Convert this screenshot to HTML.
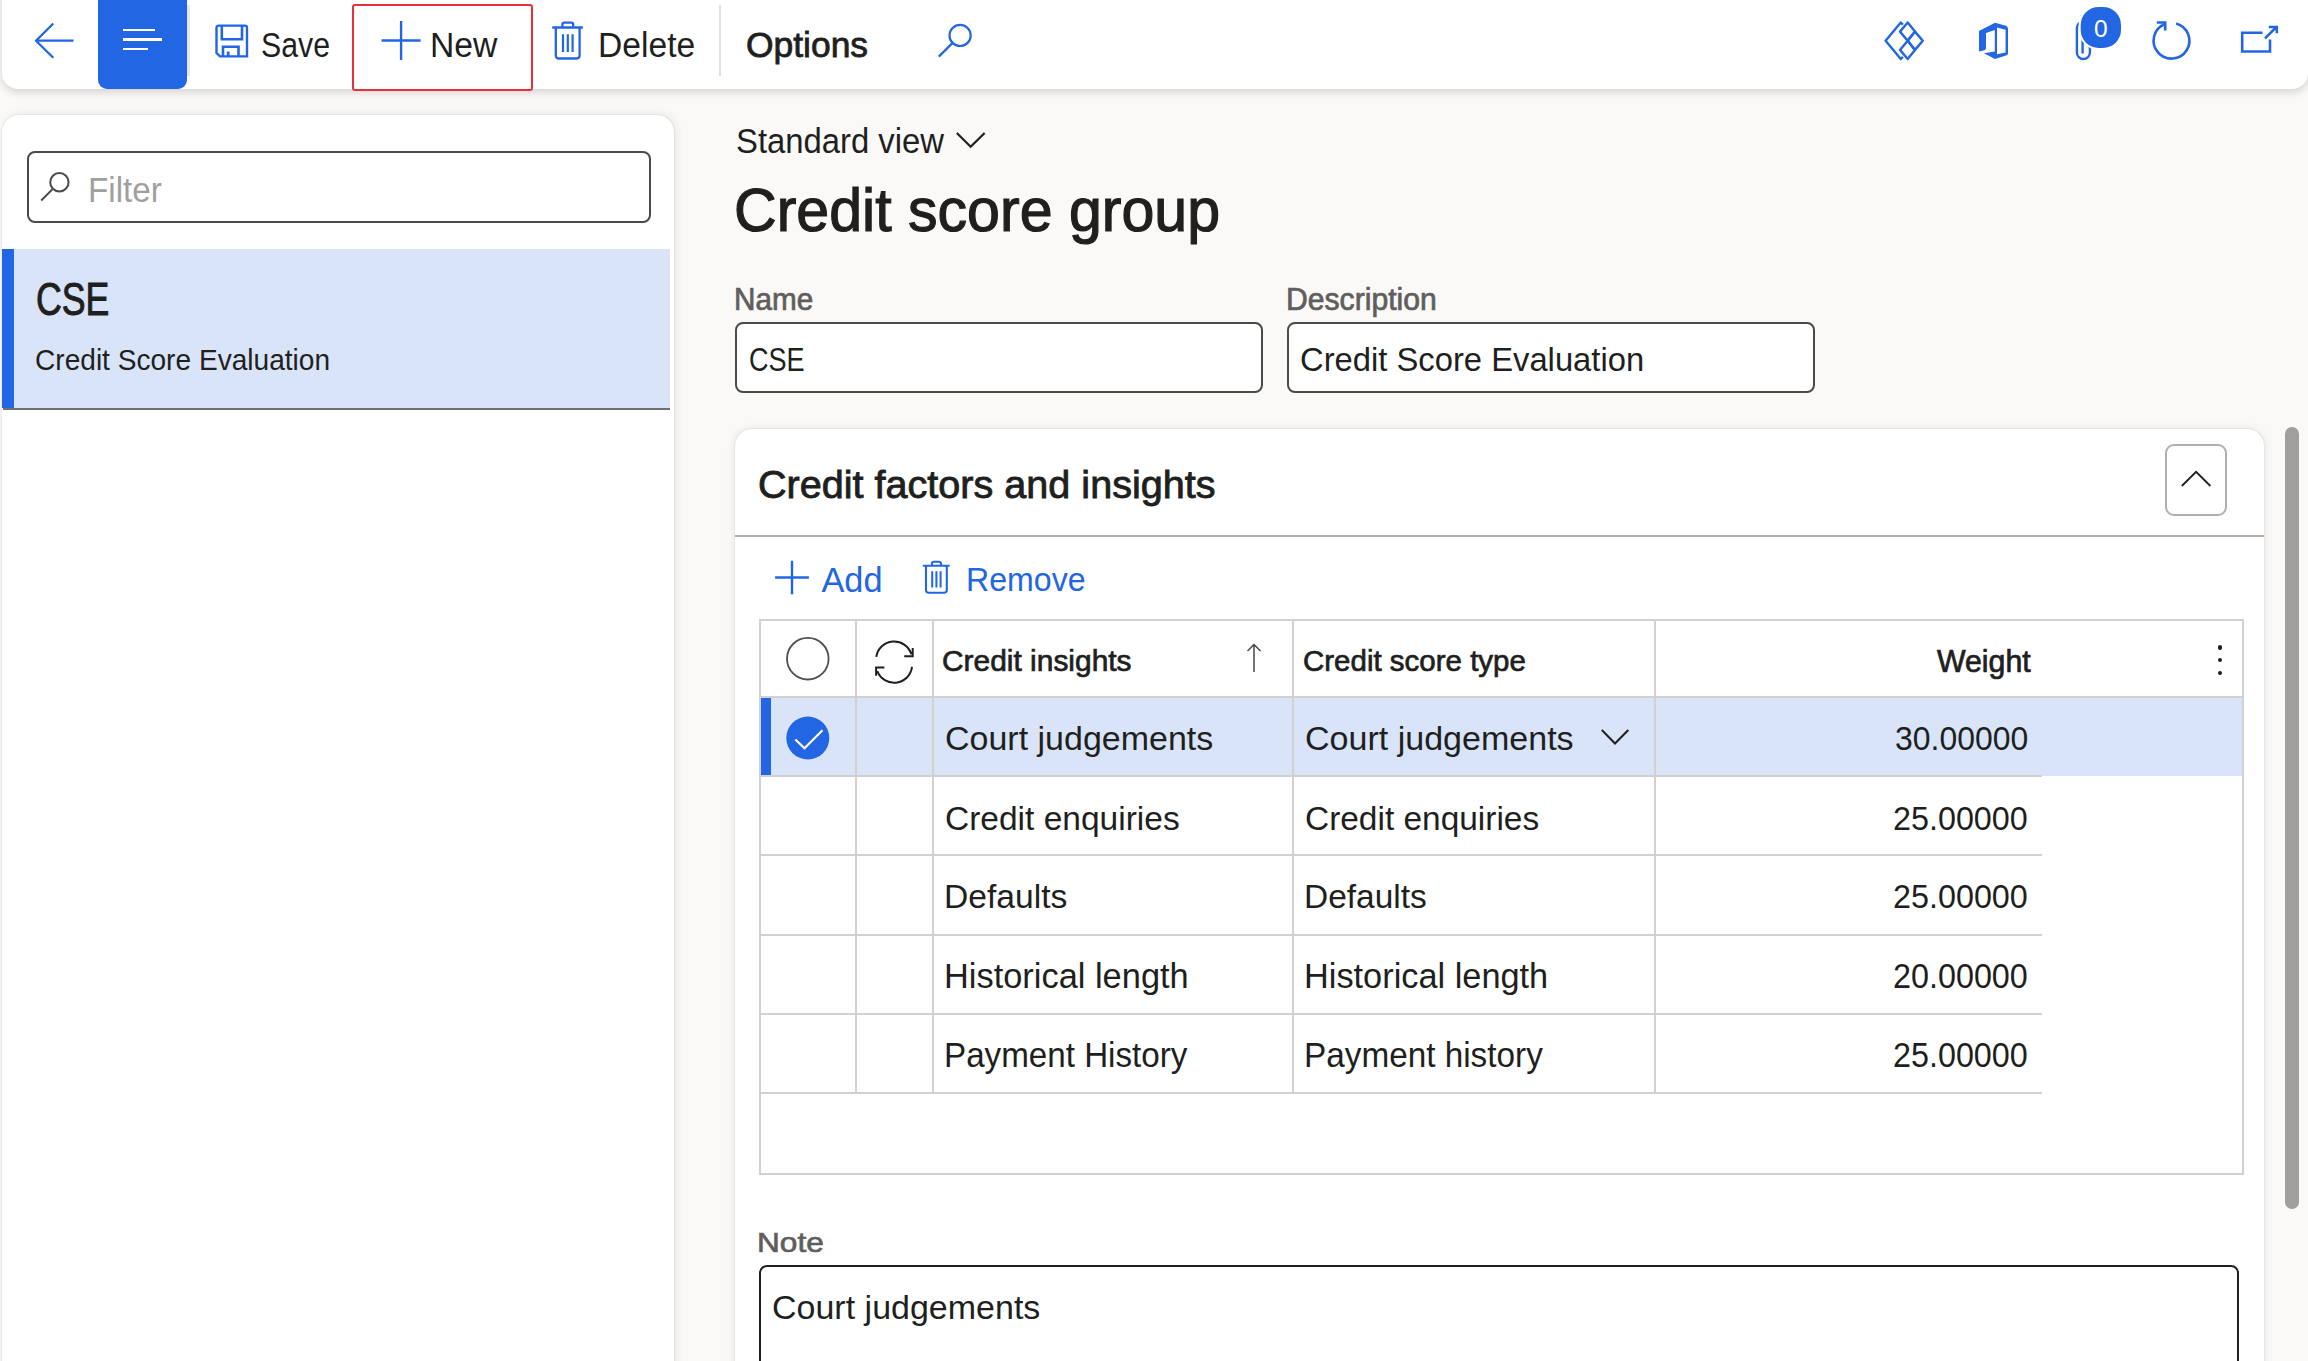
<!DOCTYPE html>
<html><head><meta charset="utf-8"><style>
html,body{margin:0;padding:0;}
body{width:2308px;height:1361px;overflow:hidden;position:relative;background:#faf9f8;font-family:"Liberation Sans",sans-serif;}
.t{position:absolute;white-space:nowrap;transform-origin:0 0;}
</style></head><body>
<div style="position:absolute;left:2px;top:-30px;width:2306px;height:119px;background:#fff;border-radius:16px;box-shadow:0 3px 8px rgba(0,0,0,0.16);"></div>
<div style="position:absolute;left:98px;top:-20px;width:89px;height:109px;background:#2266e3;border-radius:9px;"></div>
<div style="position:absolute;left:123px;top:28.75px;width:32px;height:2.5px;background:#fff;"></div>
<div style="position:absolute;left:123px;top:38.25px;width:39px;height:2.5px;background:#fff;"></div>
<div style="position:absolute;left:123px;top:47.75px;width:25px;height:2.5px;background:#fff;"></div>
<svg style="position:absolute;left:0;top:0" width="2308" height="100" viewBox="0 0 2308 100">
<g fill="none" stroke="#2266e3" stroke-width="2.6" stroke-linecap="butt" stroke-linejoin="miter">
<path d="M73.5 40.7 H36.5 M53.3 23.5 L36 40.7 L53.3 57.8" stroke-width="2.3" stroke-linejoin="round"/>
<!-- save -->
<path d="M218.8 25.6 H244.8 Q247 25.6 247 27.8 V56.4 H220 L216.5 53 V27.9 Q216.5 25.6 218.8 25.6 Z" stroke-width="2.4"/>
<path d="M221.8 25.5 V39.3 H242 V25.5"/>
<path d="M223 56.5 V46.8 H238.5 V56.5"/>
<path d="M228.2 56.5 V51.5" stroke-width="2.8"/>
<!-- plus -->
<path d="M401.1 21 V60 M381.6 40.5 H420.6" stroke-width="2.4"/>
<!-- trash -->
<path d="M552.2 27.5 H582.9 M555.8 27.5 V55.6 A2.9 2.9 0 0 0 558.7 58.5 H576.7 A2.9 2.9 0 0 0 579.6 55.6 V27.5 M562.4 27.5 V24.6 A2 2 0 0 1 564.4 22.6 H571.2 A2 2 0 0 1 573.2 24.6 V27.5" stroke-width="2.3"/>
<path d="M563 34.3 V52 M567.8 34.3 V52 M572.6 34.3 V52" stroke-width="2.2"/>
<!-- search -->
<circle cx="960.1" cy="35.4" r="10.6" stroke-width="2.2"/>
<path d="M952.6 42.9 L938.8 56.6" stroke-width="2.2"/>
<!-- power apps -->
<g stroke-width="2.4" stroke-linejoin="round">
<path d="M1902.9 24.6 L1900.8 22.5 L1885.6 40.7 L1900.8 59 L1902.9 56.9"/>
<path d="M1907.7 22.5 L1915 31.6 L1907.7 40.7 L1900 31.6 Z"/>
<path d="M1915 31.6 L1922.8 40.7 L1915 49.9 L1907.7 40.7 Z"/>
<path d="M1907.7 40.7 L1915 49.9 L1907.7 59 L1900 49.9 Z"/>
</g>
<!-- refresh -->
<path d="M2176.1 23.4 A17.9 17.9 0 1 1 2164.3 24.3" />
<path d="M2156.8 22.5 H2165.2 V30.4"/>
<!-- popout -->
<path d="M2262.5 32.8 H2242.2 V51.5 H2270 V39.5"/>
<path d="M2265 38.4 L2275.8 27.6 M2268.8 27 H2276.8 V33.2"/>
<!-- paperclip -->
<path d="M2089.9 44 V52.5 A6.5 6.5 0 0 1 2076.9 52.5 V27.5 A5.5 5.5 0 0 1 2084 22.5 M2082.6 36 V53.5" stroke-width="2.4"/>
</g>
<!-- office -->
<path fill="#2266e3" d="M1979 31 L1995 22.8 L2006 25.8 Q2008 26.6 2008 28.8 V53 Q2008 55 2006 55.6 L1995 58.9 L1984 53.2 L1994.8 51.6 V30.1 L1986 32.9 V48 Q1986 49.4 1984.5 50.2 L1979 51.5 Z M1997 27.6 V54.3 L2005.6 52.4 V29.7 Z"/>
<!-- badge -->
<rect x="2078.7" y="4.9" width="44.3" height="45" rx="20" fill="#fff"/>
<rect x="2080.7" y="6.9" width="40.3" height="41" rx="18" fill="#2266e3"/>
</svg>
<div class="t" style="left:261.49px;top:28.08px;font-size:34.49px;line-height:34.49px;color:#201f1e;transform:scaleX(0.8777);">Save</div>
<div class="t" style="left:430.30px;top:27.50px;font-size:35.65px;line-height:35.65px;color:#201f1e;transform:scaleX(0.9452);">New</div>
<div class="t" style="left:598.11px;top:27.50px;font-size:35.65px;line-height:35.65px;color:#201f1e;transform:scaleX(0.9431);">Delete</div>
<div class="t" style="left:746.23px;top:27.47px;font-size:35.22px;line-height:35.22px;color:#201f1e;-webkit-text-stroke:0.80px #201f1e;transform:scaleX(1.0057);">Options</div>
<div class="t" style="left:2093.52px;top:16.98px;font-size:24.49px;line-height:24.49px;color:#fff;transform:scaleX(1.0037);">0</div>
<div style="position:absolute;left:719px;top:5px;width:2px;height:71px;background:#e1dfdd;"></div>
<div style="position:absolute;left:187px;top:5px;width:2.5px;height:71px;background:#e9e7e5;"></div>
<div style="position:absolute;left:352px;top:3.5px;width:177px;height:83.5px;border:2.5px solid #e8303a;border-radius:3px;"></div>
<div style="position:absolute;left:2px;top:115px;width:672px;height:1300px;background:#fff;border-radius:17px;box-shadow:0 0 2px rgba(0,0,0,0.14),2px 0 10px rgba(0,0,0,0.09);"></div>
<div style="position:absolute;left:26.5px;top:151px;width:624px;height:72px;box-sizing:border-box;border:2.5px solid #4c4a48;border-radius:8px;background:#fff;"></div>
<svg style="position:absolute;left:30px;top:160px" width="50" height="50" viewBox="30 160 50 50"><g fill="none" stroke="#4c4a48" stroke-width="2"><circle cx="59.4" cy="182.3" r="9.2"/><path d="M52.8 188.9 L41.2 200.5"/></g></svg>
<div class="t" style="left:88.34px;top:173.37px;font-size:35.80px;line-height:35.80px;color:#a19f9d;transform:scaleX(0.9272);">Filter</div>
<div style="position:absolute;left:3px;top:249.3px;width:666.5px;height:159px;background:#d9e4f9;border-bottom:2px solid #707070;"></div>
<div style="position:absolute;left:2.4px;top:249.3px;width:12px;height:159px;background:#2266e3;"></div>
<div class="t" style="left:35.52px;top:277.17px;font-size:45.80px;line-height:45.80px;color:#201f1e;-webkit-text-stroke:0.98px #201f1e;transform:scaleX(0.7792);">CSE</div>
<div class="t" style="left:35.20px;top:345.15px;font-size:29.71px;line-height:29.71px;color:#201f1e;transform:scaleX(0.9456);">Credit Score Evaluation</div>
<div class="t" style="left:736.36px;top:124.21px;font-size:34.93px;line-height:34.93px;color:#201f1e;transform:scaleX(0.9401);">Standard view</div>
<svg style="position:absolute;left:950px;top:125px" width="40" height="30" viewBox="950 125 40 30"><path d="M956.8 133 L970.7 146.8 L984.6 133" fill="none" stroke="#201f1e" stroke-width="2.2"/></svg>
<div class="t" style="left:734.05px;top:179.85px;font-size:60.29px;line-height:60.29px;color:#201f1e;-webkit-text-stroke:1.22px #201f1e;transform:scaleX(0.9801);">Credit score group</div>
<div class="t" style="left:733.93px;top:284.11px;font-size:30.58px;line-height:30.58px;color:#605e5c;-webkit-text-stroke:0.72px #605e5c;transform:scaleX(0.9707);">Name</div>
<div class="t" style="left:1285.89px;top:284.11px;font-size:30.58px;line-height:30.58px;color:#605e5c;-webkit-text-stroke:0.72px #605e5c;transform:scaleX(0.9858);">Description</div>
<div style="position:absolute;left:734.5px;top:321.5px;width:528px;height:71.5px;box-sizing:border-box;border:2.5px solid #4c4a48;border-radius:8px;background:#fff;"></div>
<div style="position:absolute;left:1287px;top:321.5px;width:528px;height:71.5px;box-sizing:border-box;border:2.5px solid #4c4a48;border-radius:8px;background:#fff;"></div>
<div class="t" style="left:748.65px;top:342.70px;font-size:33.77px;line-height:33.77px;color:#201f1e;transform:scaleX(0.8012);">CSE</div>
<div class="t" style="left:1300.06px;top:342.89px;font-size:33.19px;line-height:33.19px;color:#201f1e;transform:scaleX(0.9875);">Credit Score Evaluation</div>
<div style="position:absolute;left:734.5px;top:429px;width:1529px;height:1000px;background:#fff;border-radius:17px;box-shadow:0 0 2px rgba(0,0,0,0.14),0 0 10px rgba(0,0,0,0.09);"></div>
<div class="t" style="left:757.72px;top:464.99px;font-size:39.42px;line-height:39.42px;color:#201f1e;-webkit-text-stroke:0.87px #201f1e;transform:scaleX(1.0043);">Credit factors and insights</div>
<div style="position:absolute;left:2165px;top:444px;width:62px;height:71.5px;box-sizing:border-box;border:2px solid #b3afac;border-radius:9px;"></div>
<svg style="position:absolute;left:2170px;top:460px" width="50" height="40" viewBox="2170 460 50 40"><path d="M2181.8 486 L2196.1 471.8 L2210.4 486" fill="none" stroke="#201f1e" stroke-width="1.8"/></svg>
<div style="position:absolute;left:734.5px;top:535px;width:1529px;height:2.2px;background:#b3afac;"></div>
<svg style="position:absolute;left:770px;top:555px" width="190" height="45" viewBox="770 555 190 45"><g fill="none" stroke="#2266e3" stroke-width="2.4">
<path d="M792 560.8 V594.2 M775.1 577.5 H808.9"/>
<path d="M922.8 565.7 H949.6 M926 565.7 V590.2 A2.6 2.6 0 0 0 928.6 592.8 H944.2 A2.6 2.6 0 0 0 946.8 590.2 V565.7 M932 565.7 V563.6 A1.8 1.8 0 0 1 933.8 561.8 H939.2 A1.8 1.8 0 0 1 941 563.6 V565.7" stroke-width="2.1"/>
<path d="M932.2 571.2 V587.6 M936.4 571.2 V587.6 M940.6 571.2 V587.6" stroke-width="2"/>
</g></svg>
<div class="t" style="left:821.40px;top:562.60px;font-size:34.35px;line-height:34.35px;color:#2266e3;">Add</div>
<div class="t" style="left:965.93px;top:563.21px;font-size:33.04px;line-height:33.04px;color:#2266e3;transform:scaleX(0.9718);">Remove</div>
<div style="position:absolute;left:759px;top:619px;width:1485px;height:556px;box-sizing:border-box;border:2px solid #d1d1d1;"></div>
<div style="position:absolute;left:761px;top:697px;width:1481px;height:79px;background:#d9e4f9;"></div>
<div style="position:absolute;left:761px;top:697px;width:10px;height:79px;background:#2266e3;"></div>
<div style="position:absolute;left:759px;top:695.5px;width:1485px;height:2px;background:#d1d1d1;"></div>
<div style="position:absolute;left:759px;top:775px;width:1283px;height:2px;background:#d1d1d1;"></div>
<div style="position:absolute;left:759px;top:854.2px;width:1283px;height:2px;background:#d1d1d1;"></div>
<div style="position:absolute;left:759px;top:933.5px;width:1283px;height:2px;background:#d1d1d1;"></div>
<div style="position:absolute;left:759px;top:1012.5px;width:1283px;height:2px;background:#d1d1d1;"></div>
<div style="position:absolute;left:759px;top:1091.5px;width:1283px;height:2px;background:#d1d1d1;"></div>
<div style="position:absolute;left:855px;top:619px;width:2px;height:474px;background:#d1d1d1;"></div>
<div style="position:absolute;left:931.5px;top:619px;width:2px;height:474px;background:#d1d1d1;"></div>
<div style="position:absolute;left:1291.5px;top:619px;width:2px;height:474px;background:#d1d1d1;"></div>
<div style="position:absolute;left:1654px;top:619px;width:2px;height:474px;background:#d1d1d1;"></div>
<svg style="position:absolute;left:770px;top:630px" width="160" height="130" viewBox="770 630 160 130">
<circle cx="807.8" cy="658.7" r="20.8" fill="none" stroke="#505050" stroke-width="1.8"/>
<g fill="none" stroke="#201f1e" stroke-width="2">
<path d="M876.3 656.8 A18 18 0 0 1 911.3 654.2 M904.2 656.2 H912.7 V647.9"/>
<path d="M912 666.9 A18 18 0 0 1 877.3 671.2 M884.4 667.5 H876.1 V675.8"/>
</g>
<circle cx="807.8" cy="738" r="21.5" fill="#2266e3"/>
<path d="M795.3 739.5 L804.5 748.3 L822.5 730.2" fill="none" stroke="#fff" stroke-width="2.2"/>
</svg>
<div class="t" style="left:942.40px;top:646.08px;font-size:30.14px;line-height:30.14px;color:#201f1e;-webkit-text-stroke:0.71px #201f1e;transform:scaleX(0.9931);">Credit insights</div>
<div class="t" style="left:1302.82px;top:646.08px;font-size:30.14px;line-height:30.14px;color:#201f1e;-webkit-text-stroke:0.71px #201f1e;transform:scaleX(0.9787);">Credit score type</div>
<div class="t" style="left:1937.40px;top:645.54px;font-size:31.01px;line-height:31.01px;color:#201f1e;-webkit-text-stroke:0.73px #201f1e;transform:scaleX(0.9767);">Weight</div>
<svg style="position:absolute;left:1240px;top:640px" width="30" height="40" viewBox="1240 640 30 40"><path d="M1254 672 V644.5 M1247.5 651 L1254 644.5 L1260.5 651" fill="none" stroke="#4a4848" stroke-width="1.5"/></svg>
<div style="position:absolute;left:2217.5px;top:645px;width:4.5px;height:4.5px;border-radius:50%;background:#201f1e;"></div>
<div style="position:absolute;left:2217.5px;top:657.8px;width:4.5px;height:4.5px;border-radius:50%;background:#201f1e;"></div>
<div style="position:absolute;left:2217.5px;top:670.5px;width:4.5px;height:4.5px;border-radius:50%;background:#201f1e;"></div>
<svg style="position:absolute;left:1595px;top:722px" width="40" height="30" viewBox="1595 722 40 30"><path d="M1601.8 730 L1615 743.5 L1628.3 730" fill="none" stroke="#201f1e" stroke-width="2"/></svg>
<div class="t" style="left:944.80px;top:721.87px;font-size:33.33px;line-height:33.33px;color:#201f1e;transform:scaleX(1.0196);">Court judgements</div>
<div class="t" style="left:1304.80px;top:721.87px;font-size:33.33px;line-height:33.33px;color:#201f1e;transform:scaleX(1.0212);">Court judgements</div>
<div class="t" style="left:1894.72px;top:721.87px;font-size:33.33px;line-height:33.33px;color:#201f1e;transform:scaleX(0.9579);">30.00000</div>
<div class="t" style="left:944.82px;top:801.05px;font-size:34.06px;line-height:34.06px;color:#201f1e;transform:scaleX(0.9841);">Credit enquiries</div>
<div class="t" style="left:1304.83px;top:801.05px;font-size:34.06px;line-height:34.06px;color:#201f1e;transform:scaleX(0.9820);">Credit enquiries</div>
<div class="t" style="left:1893.08px;top:801.05px;font-size:34.06px;line-height:34.06px;color:#201f1e;transform:scaleX(0.9492);">25.00000</div>
<div class="t" style="left:943.81px;top:879.97px;font-size:33.91px;line-height:33.91px;color:#201f1e;transform:scaleX(0.9918);">Defaults</div>
<div class="t" style="left:1303.82px;top:879.97px;font-size:33.91px;line-height:33.91px;color:#201f1e;transform:scaleX(0.9876);">Defaults</div>
<div class="t" style="left:1893.08px;top:879.97px;font-size:33.91px;line-height:33.91px;color:#201f1e;transform:scaleX(0.9533);">25.00000</div>
<div class="t" style="left:943.75px;top:958.68px;font-size:34.49px;line-height:34.49px;color:#201f1e;transform:scaleX(0.9974);">Historical length</div>
<div class="t" style="left:1303.75px;top:958.68px;font-size:34.49px;line-height:34.49px;color:#201f1e;transform:scaleX(0.9954);">Historical length</div>
<div class="t" style="left:1893.08px;top:958.68px;font-size:34.49px;line-height:34.49px;color:#201f1e;transform:scaleX(0.9373);">20.00000</div>
<div class="t" style="left:943.84px;top:1038.30px;font-size:34.35px;line-height:34.35px;color:#201f1e;transform:scaleX(0.9665);">Payment History</div>
<div class="t" style="left:1303.83px;top:1038.30px;font-size:34.35px;line-height:34.35px;color:#201f1e;transform:scaleX(0.9703);">Payment history</div>
<div class="t" style="left:1893.08px;top:1038.30px;font-size:34.35px;line-height:34.35px;color:#201f1e;transform:scaleX(0.9412);">25.00000</div>
<div class="t" style="left:757.37px;top:1228.69px;font-size:27.54px;line-height:27.54px;color:#605e5c;-webkit-text-stroke:0.67px #605e5c;transform:scaleX(1.1479);">Note</div>
<div style="position:absolute;left:759px;top:1264.5px;width:1480px;height:200px;box-sizing:border-box;border:2.5px solid #201f1e;border-radius:8px;background:#fff;"></div>
<div class="t" style="left:772.30px;top:1291.07px;font-size:33.33px;line-height:33.33px;color:#201f1e;transform:scaleX(1.0200);">Court judgements</div>
<div style="position:absolute;left:2285px;top:427px;width:14px;height:782px;border-radius:7px;background:#a19f9d;"></div>
</body></html>
